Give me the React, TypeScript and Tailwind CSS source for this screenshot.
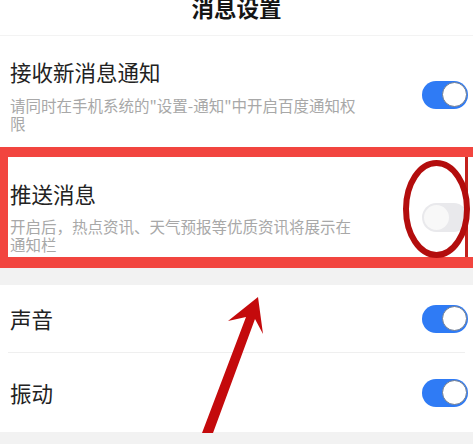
import React from "react";

function Toggle({ on }: { on: boolean }) {
  if (on) {
    return (
      <div className="relative w-[46px] h-[28px] rounded-full bg-[#2f7bf5] shrink-0">
        <div className="absolute right-[1px] top-[1.5px] w-[25px] h-[25px] rounded-full bg-white border-[1.5px] border-[#6f7c90]" />
      </div>
    );
  }
  return (
    <div className="relative w-[46px] h-[29px] rounded-full bg-[#e9e9ec] shrink-0">
      <div className="absolute left-[2px] top-[2px] w-[25px] h-[25px] rounded-full bg-[#f8f8f8]" />
    </div>
  );
}

export default function App() {
  return (
    <div
      className="relative w-[473px] h-[444px] overflow-hidden bg-white"
      style={{ fontFamily: '"Noto Sans CJK SC", "Noto Sans", sans-serif' }}
    >
      {/* Header */}
      <div className="h-[36px] border-b border-[#f3f3f3] flex justify-center">
        <span className="-mt-[4px] text-[22.5px] leading-[22px] font-bold text-[#151515]">
          消息设置
        </span>
      </div>

      {/* Row 1 */}
      <div className="flex items-center pl-[10px] pr-[5px] pt-[24px] pb-[15px]">
        <div className="flex-1">
          <div className="text-[21.5px] leading-[24px] text-[#222]">接收新消息通知</div>
          <div className="mt-[12px] text-[15.5px] leading-[18px] text-[#a8a8a8]">
            <div>请同时在手机系统的"设置-通知"中开启百度通知权</div>
            <div>限</div>
          </div>
        </div>
        <div className="-mt-[3px]">
          <Toggle on />
        </div>
      </div>

      {/* Highlighted row 2 */}
      <div className="bg-[#f2453f] pt-[10px] pb-[11px] pl-[8px]">
        <div className="flex h-[100px]">
          <div className="flex-1 bg-white flex items-start pl-[2px] pt-[25px]">
            <div className="flex-1">
              <div className="text-[21.5px] leading-[24px] text-[#222]">推送消息</div>
              <div className="mt-[11px] text-[15.5px] leading-[18px] text-[#a8a8a8]">
                <div>开启后，热点资讯、天气预报等优质资讯将展示在</div>
                <div>通知栏</div>
              </div>
            </div>
            <div className="mt-[21px] mr-[-3px]">
              <Toggle on={false} />
            </div>
          </div>
          <div className="w-[3px] bg-[#c2201c]" />
          <div className="w-[5px] bg-white" />
        </div>
      </div>

      {/* Gray band */}
      <div className="h-[17px] bg-[#f2f2f2]" />

      {/* Sound */}
      <div className="h-[67px] flex items-center pl-[10px] pr-[5px]">
        <div className="flex-1 text-[21.5px] leading-[24px] text-[#222]">声音</div>
        <Toggle on />
      </div>
      <div className="mx-[8px] h-px bg-[#efefef]" />

      {/* Vibration */}
      <div className="h-[79px] flex items-center pl-[10px] pr-[5px]">
        <div className="flex-1 text-[21.5px] leading-[24px] text-[#222]">振动</div>
        <Toggle on />
      </div>
      <div className="h-[20px] bg-[#f2f2f2]" />

      {/* Annotations */}
      <svg
        className="absolute left-0 top-0 pointer-events-none"
        width="473"
        height="444"
        viewBox="0 0 473 444"
      >
        <ellipse
          cx="436.5"
          cy="209"
          rx="30.5"
          ry="46"
          fill="none"
          stroke="#b30d0d"
          strokeWidth="6"
        />
        <polygon
          points="202,433 246,317 228,321 258,297 263,334 255,319 213,433"
          fill="#c40a0c"
        />
      </svg>
    </div>
  );
}
